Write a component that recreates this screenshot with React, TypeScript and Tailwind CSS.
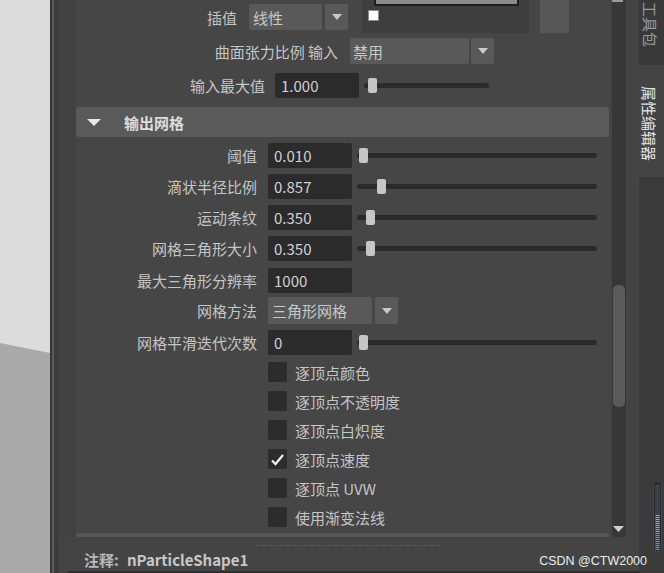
import React from "react";

const DownArrow = ({ w = 10, h = 6, color = "#c8c8c8" }: { w?: number; h?: number; color?: string }) => (
  <svg width={w} height={h} viewBox={`0 0 ${w} ${h}`}>
    <path d={`M0 0H${w}L${w / 2} ${h}Z`} fill={color} />
  </svg>
);

function ArrowButton({ className }: { className: string }) {
  return (
    <div className={`w-[23px] bg-[#595959] rounded-[2px] flex items-center justify-center shrink-0 ${className}`}>
      <DownArrow />
    </div>
  );
}

function Slider({ className, thumb }: { className: string; thumb: string }) {
  return (
    <div className={`relative h-[15px] flex items-center shrink-0 ${className}`}>
      <div className="h-[5px] w-full rounded-full bg-[#2a2a2a]" />
      <div className={`absolute top-0 w-[9px] h-[15px] rounded-[2px] bg-[#c6c6c6] ${thumb}`} />
    </div>
  );
}

function Field({ value, className = "" }: { value: string; className?: string }) {
  return (
    <div className={`w-[84px] h-[25px] bg-[#2b2b2b] rounded-[2px] pl-[6px] flex items-center text-[#d2d2d2] shrink-0 ${className}`}>
      {value}
    </div>
  );
}

function FieldRow({
  label,
  value,
  className,
  thumb,
}: {
  label: string;
  value: string;
  className: string;
  thumb?: string;
}) {
  return (
    <div className={`flex items-center h-[25px] ${className}`}>
      <div className="w-[181px] text-right shrink-0">{label}</div>
      <Field value={value} className="ml-[11px]" />
      {thumb && <Slider className="ml-[5px] w-[240px]" thumb={thumb} />}
    </div>
  );
}

function CheckRow({ label, checked, className }: { label: string; checked?: boolean; className: string }) {
  return (
    <div className={`flex items-center h-[20px] ${className}`}>
      <div className="ml-[192px] w-[19px] h-[20px] rounded-[2px] bg-[#2c2c2c] flex items-center justify-center shrink-0">
        {checked && (
          <svg width="15" height="13" viewBox="0 0 15 13">
            <path d="M2 7.5L5.5 11L13 2" stroke="#f2f2f2" strokeWidth="2.2" fill="none" />
          </svg>
        )}
      </div>
      <div className="ml-[8px]">{label}</div>
    </div>
  );
}

function Meter() {
  const ticks = [];
  for (let i = 0; i < 18; i++) {
    const y = 34 + i * 2;
    const c = i < 5 ? "#c9b51e" : i < 9 ? "#8fbf3c" : "#2db3a3";
    ticks.push(<rect key={i} x="2.5" y={y} width="4" height="1" fill={c} />);
  }
  return (
    <svg width="9" height="71" viewBox="0 0 9 71">
      <rect x="0.5" y="0.5" width="8" height="70" rx="3" fill="#262b30" stroke="#2c4d63" />
      <rect x="2" y="4" width="5" height="64" fill="#3a4046" />
      {ticks}
    </svg>
  );
}

export default function App() {
  return (
    <div className="relative w-[664px] h-[573px] flex overflow-hidden bg-[#444444] font-['Noto_Sans_CJK_SC','Noto_Sans',sans-serif] text-[15px] leading-none text-[#c5c5c5]">
      {/* viewport */}
      <div className="w-[50px] h-full shrink-0">
        <svg width="50" height="573" viewBox="0 0 50 573">
          <rect width="50" height="573" fill="#dcdcdc" />
          <polygon points="0,343 50,353 50,573 0,573" fill="#a9a9a9" />
        </svg>
      </div>
      <div className="w-[2px] h-full bg-[#363636] shrink-0" />
      <div className="w-[2px] h-full bg-[#5b5b5b] shrink-0" />
      <div className="w-[5px] h-full bg-[#3c3c3c] shrink-0" />

      {/* main panel */}
      <div className="w-[580px] h-full flex flex-col bg-[#444444] shrink-0">
        <div className="h-[537px] flex shrink-0">
          <div className="w-[17px] bg-[#424242] shrink-0" />
          {/* content */}
          <div className="w-[533px] flex flex-col bg-[#464646] shrink-0">
            {/* row A */}
            <div className="flex items-start h-[33px] shrink-0">
              <div className="w-[161px] h-[26px] mt-[4px] flex items-center justify-end shrink-0">插值</div>
              <div className="ml-[12px] mt-[4px] w-[73px] h-[26px] bg-[#595959] rounded-[2px] pl-[4px] flex items-center text-[#c8c8c8] shrink-0">
                线性
              </div>
              <ArrowButton className="ml-[3px] mt-[4px] h-[26px]" />
              <div className="ml-[14px] w-[167px] h-[33px] bg-[#3e3e3e] flex flex-col shrink-0">
                <div className="ml-[12px] w-[145px] h-[6px] bg-[#8a8a8a] border-x-2 border-b-2 border-[#1e1e1e]" />
                <div className="ml-[6px] mt-[4px] w-[11px] h-[11px] bg-white border border-[#8a8a8a]" />
              </div>
              <div className="ml-[11px] w-[29px] h-[33px] bg-[#575757] shrink-0" />
            </div>
            {/* row B */}
            <div className="flex items-center h-[26px] mt-[5px] shrink-0">
              <div className="w-[262px] text-right shrink-0">曲面张力比例 输入</div>
              <div className="ml-[12px] w-[119px] h-[26px] bg-[#595959] rounded-[2px] pl-[3px] flex items-center text-[#c8c8c8] shrink-0">
                禁用
              </div>
              <ArrowButton className="ml-[2px] h-[26px]" />
            </div>
            {/* row C */}
            <div className="flex items-center h-[25px] mt-[9px] shrink-0">
              <div className="w-[189px] text-right shrink-0">输入最大值</div>
              <Field value="1.000" className="ml-[10px]" />
              <Slider className="ml-[5px] w-[125px]" thumb="left-[4px]" />
            </div>
            {/* header */}
            <div className="mt-[9px] h-[30px] bg-[#5a5a5a] rounded-[3px] flex items-center shrink-0">
              <div className="ml-[11px] flex items-center">
                <DownArrow w={14} h={7} color="#e8e8e8" />
              </div>
              <div className="ml-[23px] font-bold text-[#dcdcdc]">输出网格</div>
            </div>
            {/* section */}
            <div className="h-[395px] flex flex-col pt-[6px] shrink-0">
              <FieldRow label="阈值" value="0.010" className="" thumb="left-[2px]" />
              <FieldRow label="滴状半径比例" value="0.857" className="mt-[6px]" thumb="left-[20px]" />
              <FieldRow label="运动条纹" value="0.350" className="mt-[6px]" thumb="left-[9px]" />
              <FieldRow label="网格三角形大小" value="0.350" className="mt-[6px]" thumb="left-[9px]" />
              <FieldRow label="最大三角形分辨率" value="1000" className="mt-[7px]" />
              <div className="flex items-center h-[27px] mt-[4px] shrink-0">
                <div className="w-[181px] text-right shrink-0">网格方法</div>
                <div className="ml-[11px] w-[104px] h-[27px] bg-[#595959] rounded-[2px] pl-[4px] flex items-center text-[#c8c8c8] shrink-0">
                  三角形网格
                </div>
                <ArrowButton className="ml-[3px] h-[27px]" />
              </div>
              <FieldRow label="网格平滑迭代次数" value="0" className="mt-[6px]" thumb="left-[2px]" />
              <CheckRow label="逐顶点颜色" className="mt-[7px]" />
              <CheckRow label="逐顶点不透明度" className="mt-[9px]" />
              <CheckRow label="逐顶点白炽度" className="mt-[9px]" />
              <CheckRow label="逐顶点速度" checked className="mt-[9px]" />
              <CheckRow label="逐顶点 UVW" className="mt-[9px]" />
              <CheckRow label="使用渐变法线" className="mt-[9px]" />
            </div>
            <div className="h-[1px] bg-[#444444] shrink-0" />
            <div className="h-[4px] bg-[#565656] rounded-[2px] shrink-0" />
          </div>
          <div className="w-[3px] shrink-0" />
          {/* scrollbar */}
          <div className="w-[14px] bg-[#373737] flex flex-col shrink-0">
            <div className="w-[11px] h-[2px] bg-[#9a9a9a]" />
            <div className="ml-[1px] mt-[283px] w-[12px] h-[122px] rounded-[5px] bg-[#5a5a5a]" />
            <div className="flex-1" />
            <div className="ml-[1px] flex mb-[5px]">
              <DownArrow w={11} h={6} color="#cfcfcf" />
            </div>
          </div>
          <div className="w-[13px] shrink-0" />
        </div>
        {/* footer */}
        <div className="flex-1 flex flex-col">
          <div className="mt-[8px] ml-[197px] w-[186px] h-[1px] bg-[repeating-linear-gradient(90deg,#707070_0_1px,transparent_1px_3px)]" />
          <div className="mt-[4px] ml-[25px] h-[18px] flex items-center font-bold text-[15px]">
            <span className="text-[#b8b8b8]">注释:</span>
            <span className="ml-[8px] text-[#c8c8c8]">nParticleShape1</span>
          </div>
          <div className="flex-1" />
          <div className="ml-[9px] h-[2px] bg-[#2e2e2e]" />
        </div>
      </div>

      {/* tabs */}
      <div className="w-[25px] h-full flex flex-col bg-[#3a3a3a] shrink-0">
        <div className="h-[65px] bg-[#393939] rounded-br-[3px] flex flex-col items-center pr-[2px] pt-[2px] shrink-0">
          <div className="shrink-0 [writing-mode:vertical-rl] [text-orientation:sideways] leading-[15px] text-[#9a9a9a]">
            工具包
          </div>
        </div>
        <div className="h-[3px] bg-[#444444] shrink-0" />
        <div className="h-[109px] bg-[#444444] flex flex-col items-center pt-[18px] pr-[4px] shrink-0">
          <div className="[writing-mode:vertical-rl] [text-orientation:sideways] leading-[15px] text-[#e2e2e2]">
            属性编辑器
          </div>
        </div>
        <div className="flex-1 flex flex-col">
          <div className="mt-[304px] ml-[14px] flex">
            <Meter />
          </div>
        </div>
      </div>

      {/* watermark */}
      <div className="absolute right-[17px] bottom-[6px] font-['Liberation_Sans',sans-serif] text-[12.5px] leading-none text-[#ececec]">
        CSDN @CTW2000
      </div>
    </div>
  );
}
